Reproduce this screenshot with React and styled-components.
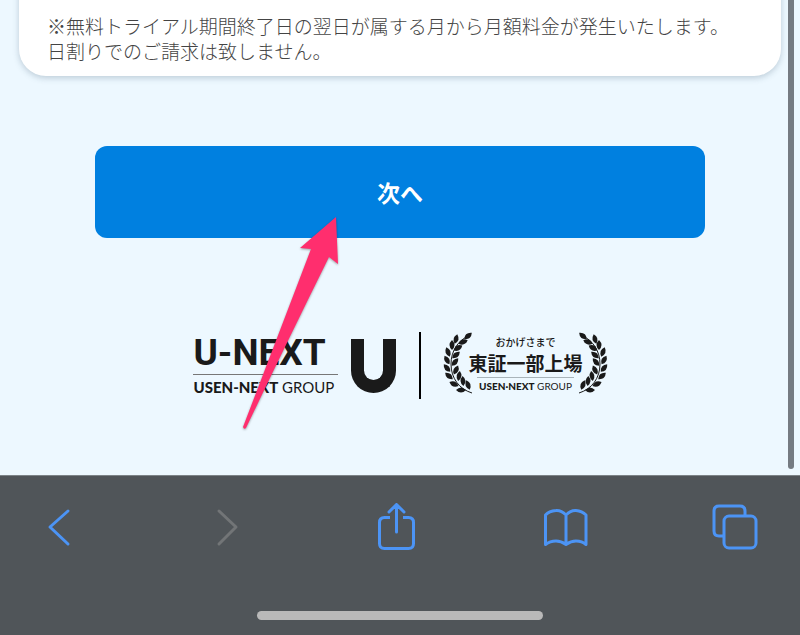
import React from 'react';
import styled, { createGlobalStyle } from 'styled-components';

const Colors = {
  SKY: '#edf8ff',
  WHITE: '#ffffff',
  BLUE: '#0080e0',
  INK: '#1a1a1a',
  TEXT: '#444444',
  BAR: '#505559',
  BAR_LINE: '#7c8387',
  ICON: '#4c94f5',
  ICON_OFF: '#727577',
  PINK: '#ff2e6e',
};

const GlobalStyle = createGlobalStyle`
  * {
    box-sizing: border-box;
  }

  body {
    margin: 0;
    background-color: ${Colors.SKY};
    font-family: "Noto Sans CJK JP", sans-serif;
  }
`;

const Screen = styled.div`
  display: flex;
  flex-direction: column;
  min-height: 100vh;
`;

const Main = styled.main`
  position: relative;
  display: flow-root;
  flex: 1;
  padding: 0 19px;
`;

const ScrollThumb = styled.div`
  position: absolute;
  top: 0;
  right: 6px;
  bottom: 6px;
  width: 6px;
  border-radius: 0 0 3px 3px;
  background-color: #757b82;
`;

const Card = styled.section`
  margin-top: -40px;
  padding: 53px 28px 13px;
  border-radius: 27px;
  background-color: ${Colors.WHITE};
  box-shadow: 0 2px 6px rgba(60, 90, 110, 0.28);
`;

const Note = styled.p`
  margin: 0;
  font-size: 19px;
  font-weight: 300;
  line-height: 25px;
  color: ${Colors.TEXT};
`;

const Actions = styled.div`
  position: relative;
  margin: 70px 76px 0;
`;

const NextButton = styled.button`
  display: block;
  width: 100%;
  height: 92px;
  padding: 0;
  border: 0;
  border-radius: 12px;
  background-color: ${Colors.BLUE};
  font-family: inherit;
  font-size: 23px;
  font-weight: 700;
  color: ${Colors.WHITE};
  cursor: pointer;
`;

const Pointer = styled.svg`
  position: absolute;
  top: 68px;
  left: 50%;
  z-index: 1;
  margin-left: -164px;
  overflow: visible;
  pointer-events: none;
  filter: drop-shadow(0 1px 1px rgba(0, 0, 0, 0.35));
`;

const Footer = styled.footer`
  display: flex;
  align-items: center;
  justify-content: center;
  gap: 23px;
  padding: 94px 0 76px;
  color: ${Colors.INK};
`;

const Brand = styled.div`
  display: flex;
  align-items: center;
  gap: 13px;
`;

const Wordmark = styled.div`
  width: 145px;
  white-space: nowrap;
`;

const BrandName = styled.div`
  padding-bottom: 1px;
  border-bottom: 1px solid #777777;
  font-family: Roboto, sans-serif;
  font-size: 37px;
  font-weight: 700;
  line-height: 40px;
`;

const GroupName = styled.div`
  font-family: Lato, sans-serif;
  font-size: ${({ $small }) => ($small ? 10 : 15)}px;
  line-height: ${({ $small }) => ($small ? 16 : 24)}px;
  white-space: nowrap;

  b {
    font-weight: 900;
  }
`;

const Symbol = styled.div`
  width: 45px;
  height: 54px;
  border: solid ${Colors.INK};
  border-width: 0 13px 13px;
  border-radius: 0 0 23px 23px;
`;

const Divider = styled.div`
  width: 2px;
  height: 67px;
  background-color: #000000;
`;

const Badge = styled.div`
  display: flex;
  align-items: center;
  padding-bottom: 4px;
`;

const BadgeText = styled.div`
  display: flex;
  flex-direction: column;
  align-items: center;
  margin: 0 -4px;
  white-space: nowrap;
`;

const Thanks = styled.div`
  font-size: 10px;
  font-weight: 500;
  line-height: 15px;
`;

const Listing = styled.div`
  font-size: 19px;
  font-weight: 700;
  line-height: 28px;
`;

const BadgeRule = styled.div`
  width: 97px;
  height: 1px;
  background-color: #a9b4ba;
`;

const Branch = styled.svg`
  overflow: visible;
  transform: ${({ $flip }) => ($flip ? 'scaleX(-1)' : 'none')};
`;

const Toolbar = styled.nav`
  border-top: 1px solid ${Colors.BAR_LINE};
  background-color: ${Colors.BAR};
`;

const Tools = styled.div`
  display: flex;
  justify-content: space-between;
  padding: 27px 41px 0 35px;
`;

const Tool = styled.button`
  padding: 0;
  border: 0;
  background: none;
  color: ${Colors.ICON};
  cursor: pointer;

  &:disabled {
    color: ${Colors.ICON_OFF};
    cursor: default;
  }

  svg {
    display: block;
    width: 48px;
    height: 48px;
    fill: none;
    stroke: currentColor;
    stroke-width: 3;
    stroke-linecap: round;
    stroke-linejoin: round;
  }
`;

const HomeBar = styled.div`
  width: 286px;
  height: 9px;
  margin: 60px auto 15px;
  border-radius: 5px;
  background-color: #b9b9b9;
`;

// x, y, rotation of every leaf on the left branch
const leaves = [
  [12, 5, -75], [8, 11, -90], [4, 18, -110], [3, 26, -120],
  [3, 34, -130], [5, 42, -140], [10, 50, -155], [17, 56, -180],
  [24, 2, -40], [19, 8, -20], [14, 14, -30], [12, 21, -40],
  [11, 28, -50], [12, 36, -65], [15, 42, -80], [19, 47, -95],
  [24, 51, -110],
];

const Laurel = ({ flip }) => (
  <Branch $flip={flip} width="28" height="60" viewBox="0 0 28 60" aria-hidden="true">
    <path d="M28 59C15 55 7 44 7 30C7 17 14 7 24 2" fill="none" stroke={Colors.INK} strokeWidth="1" />
    {leaves.map(([x, y, angle]) => (
      <path key={`${x}-${y}`} d="M-5 0Q0 -5 5 0Q0 5 -5 0Z" fill={Colors.INK} transform={`translate(${x} ${y}) rotate(${angle})`} />
    ))}
  </Branch>
);

const App = () => <React.Fragment>
  <GlobalStyle />
  <Screen>
    <Main>
      <Card>
        <Note>
          ※無料トライアル期間終了日の翌日が属する月から月額料金が発生いたします。<br />
          日割りでのご請求は致しません。
        </Note>
      </Card>

      <Actions>
        <NextButton type="button">次へ</NextButton>
        <Pointer width="110" height="220" viewBox="236 214 110 220" aria-hidden="true">
          <path d="M336 217L338 264L329 257Q288 340 246 428Q244 430 243 427L311 249L300 248Z" fill={Colors.PINK} />
        </Pointer>
      </Actions>

      <Footer>
        <Brand>
          <Wordmark>
            <BrandName>U-NEXT</BrandName>
            <GroupName><b>USEN-NEXT</b> GROUP</GroupName>
          </Wordmark>
          <Symbol />
        </Brand>
        <Divider />
        <Badge>
          <Laurel />
          <BadgeText>
            <Thanks>おかげさまで</Thanks>
            <Listing>東証一部上場</Listing>
            <BadgeRule />
            <GroupName $small><b>USEN·NEXT</b> GROUP</GroupName>
          </BadgeText>
          <Laurel flip />
        </Badge>
      </Footer>
      <ScrollThumb />
    </Main>

    <Toolbar>
      <Tools>
        <Tool type="button" aria-label="戻る">
          <svg viewBox="0 0 48 48"><path d="M33 8L15 24L33 41" /></svg>
        </Tool>
        <Tool type="button" aria-label="進む" disabled>
          <svg viewBox="0 0 48 48"><path d="M15 8L32 24L15 41" /></svg>
        </Tool>
        <Tool type="button" aria-label="共有">
          <svg viewBox="0 0 48 48">
            <path d="M17 14.500H11.500Q6.500 14.500 6.500 19.500V40.500Q6.500 45.500 11.500 45.500H35.500Q40.500 45.500 40.500 40.500V19.500Q40.500 14.500 35.500 14.500H30" strokeLinecap="butt" />
            <path d="M23.500 29V2M16 9L23.500 1.500L31 9" />
          </svg>
        </Tool>
        <Tool type="button" aria-label="ブックマーク">
          <svg viewBox="0 0 48 48">
            <path d="M24 12Q19 7 14 7.500Q7 8 3.500 12V41.500Q8 38 14 38Q19 38 24 41.500Q29 38 34 38Q40 38 44 41.500V12Q40 8 34 7.500Q29 7 24 12V41" />
          </svg>
        </Tool>
        <Tool type="button" aria-label="タブ">
          <svg viewBox="0 0 48 48">
            <path d="M12 33H8Q3 33 3 28V8Q3 3 8 3H29Q34 3 34 8V13" strokeLinecap="butt" />
            <rect x="13" y="13" width="32" height="32" rx="5" />
          </svg>
        </Tool>
      </Tools>
      <HomeBar />
    </Toolbar>
  </Screen>
</React.Fragment>;

export default App;
